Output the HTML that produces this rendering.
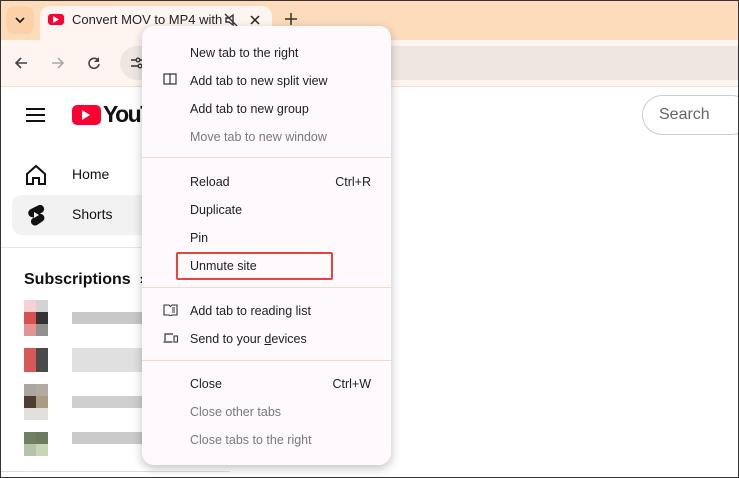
<!DOCTYPE html><html><head><style>
*{margin:0;padding:0;box-sizing:border-box}
body{width:739px;height:478px;overflow:hidden;font-family:"Liberation Sans",sans-serif;background:#fff;position:relative}
.a{position:absolute}
.tabs{left:0;top:0;width:739px;height:40px;background:#fddcbc}
.tb{left:0;top:40px;width:739px;height:47px;background:#fff5f0;border-bottom:1px solid #f6dcc6}
.menu{left:142px;top:26px;width:249px;height:439px;background:#fdf9fc;border-radius:12px;box-shadow:0 3px 10px rgba(0,0,0,.25)}
.mi{position:absolute;left:48px;font-size:12.5px;color:#1f1f1f}
.g{color:#7a7a7a}
.sc{position:absolute;right:20px;font-size:12.5px;color:#1f1f1f}
.sep{position:absolute;left:0;width:249px;height:1px;background:#f6d9bf}
.blk{position:absolute;width:12px;height:12px}
</style></head><body>
<div class="a tabs"></div>
<div class="a" style="left:6px;top:6px;width:28px;height:28px;background:#fbd1aa;border-radius:8px"></div>
<svg class="a" style="left:14px;top:15px" width="12" height="10"><path d="M2 3l4 4 4-4" stroke="#222" stroke-width="1.8" fill="none"/></svg>
<div class="a" style="left:40px;top:6px;width:232px;height:34px;background:#fff5f0;border-radius:10px 10px 0 0"></div>
<div class="a" style="left:48px;top:14px;width:16px;height:11px;background:#f03;border-radius:3px"></div>
<svg class="a" style="left:53px;top:16px" width="7" height="8"><path d="M0 0L6 3.5 0 7z" fill="#fff"/></svg>
<div class="a" style="left:72px;top:12px;font-size:13px;color:#222;width:150px;overflow:hidden;white-space:nowrap">Convert MOV to MP4 with a</div>
<svg class="a" style="left:224px;top:13px" width="14" height="14"><path d="M2 5h3l4-3v10l-4-3H2z" fill="none" stroke="#333" stroke-width="1.4"/><path d="M1 1l12 12" stroke="#333" stroke-width="1.4"/></svg>
<svg class="a" style="left:250px;top:15px" width="10" height="10"><path d="M1 1l8 8M9 1l-8 8" stroke="#222" stroke-width="1.5"/></svg>
<svg class="a" style="left:285px;top:13px" width="12" height="12"><path d="M6 0v12M0 6h12" stroke="#333" stroke-width="1.5"/></svg>
<div class="a tb"></div>
<div class="a" style="left:120px;top:46px;width:619px;height:34px;background:#efe6e1;border-radius:17px 0 0 17px"></div>
<svg class="a" style="left:14px;top:56px" width="14" height="14"><path d="M13 7H2M7 2L2 7l5 5" stroke="#444" stroke-width="1.6" fill="none"/></svg>
<svg class="a" style="left:51px;top:56px" width="14" height="14"><path d="M1 7h11M7 2l5 5-5 5" stroke="#aaa" stroke-width="1.6" fill="none"/></svg>
<svg class="a" style="left:87px;top:56px" width="14" height="14"><path d="M11.5 5A5 5 0 1 0 12 8" stroke="#444" stroke-width="1.6" fill="none"/><path d="M12 1v5H7" fill="#444"/></svg>
<svg class="a" style="left:130px;top:56px" width="14" height="14"><path d="M1 4h5M1 10h7M10 4h3M12 10h1" stroke="#333" stroke-width="1.4"/><circle cx="8" cy="4" r="1.8" fill="none" stroke="#333" stroke-width="1.3"/><circle cx="10" cy="10" r="1.8" fill="none" stroke="#333" stroke-width="1.3"/></svg>
<svg class="a" style="left:26px;top:107px" width="20" height="16"><path d="M0 2h19M0 8h19M0 14h19" stroke="#111" stroke-width="2"/></svg>
<div class="a" style="left:72px;top:105px;width:29px;height:20px;background:#f03;border-radius:5px"></div>
<svg class="a" style="left:82px;top:110px" width="9" height="10"><path d="M0 0L8 5 0 10z" fill="#fff"/></svg>
<div class="a" style="left:103px;top:101px;font-size:23px;font-weight:bold;letter-spacing:-1.5px;color:#111">YouTu</div>
<div class="a" style="left:642px;top:95px;width:110px;height:40px;border:1px solid #ccc;border-radius:20px"></div>
<div class="a" style="left:659px;top:106px;font-size:16px;color:#666">Search</div>
<svg class="a" style="left:25px;top:164px" width="22" height="22"><path d="M2 10L11 2l9 8v10h-6v-6h-6v6H2z" fill="none" stroke="#111" stroke-width="2"/></svg>
<div class="a" style="left:72px;top:166px;font-size:14px;color:#111">Home</div>
<div class="a" style="left:12px;top:195px;width:140px;height:40px;background:#f2f2f2;border-radius:10px"></div>
<svg class="a" style="left:27px;top:203px" width="18" height="24"><path d="M12 2L4 6a4 4 0 0 0 3 8l-1 1a4 4 0 0 0 4 7l6-4a4 4 0 0 0-3-7l1-1a4 4 0 0 0-2-8z" fill="#111"/><path d="M7 9v6l5-3z" fill="#f2f2f2"/></svg>
<div class="a" style="left:72px;top:206px;font-size:14px;color:#111">Shorts</div>
<div class="a" style="left:0;top:247px;width:142px;height:1px;background:#e5e5e5"></div>
<div class="a" style="left:24px;top:271px;font-size:16px;font-weight:bold;color:#111">Subscriptions&nbsp;&nbsp;›</div>
<div class="blk a" style="left:24px;top:300px;background:#f5d0d5"></div><div class="blk a" style="left:36px;top:300px;background:#d3d3d3"></div>
<div class="blk a" style="left:24px;top:312px;background:#d85052"></div><div class="blk a" style="left:36px;top:312px;background:#333"></div>
<div class="blk a" style="left:24px;top:324px;background:#e59293"></div><div class="blk a" style="left:36px;top:324px;background:#909090"></div>
<div class="a" style="left:72px;top:312px;width:70px;height:12px;background:#c8c8c8"></div>
<div class="a" style="left:24px;top:348px;width:12px;height:24px;background:#d85858"></div><div class="a" style="left:36px;top:348px;width:12px;height:24px;background:#4a4a4a"></div>
<div class="a" style="left:72px;top:348px;width:70px;height:24px;background:#e0e0e0"></div>
<div class="blk a" style="left:24px;top:384px;background:#aaa6a0"></div><div class="blk a" style="left:36px;top:384px;background:#b3aaa0"></div>
<div class="blk a" style="left:24px;top:396px;background:#4e3e30"></div><div class="blk a" style="left:36px;top:396px;background:#a99c80"></div>
<div class="a" style="left:24px;top:408px;width:24px;height:12px;background:#e2e0dc"></div>
<div class="a" style="left:72px;top:396px;width:70px;height:12px;background:#cfcfcf"></div>
<div class="blk a" style="left:24px;top:432px;background:#708060"></div><div class="blk a" style="left:36px;top:432px;background:#6c7a60"></div>
<div class="blk a" style="left:24px;top:444px;background:#b6c3ac"></div><div class="blk a" style="left:36px;top:444px;background:#c9d6b4"></div>
<div class="a" style="left:72px;top:432px;width:70px;height:12px;background:#cacaca"></div>
<div class="a" style="left:0;top:471px;width:230px;height:1px;background:#ddd"></div>

<div class="a menu">
<div class="mi" style="top:20px">New tab to the right</div>
<svg class="a" style="left:21px;top:47px" width="14" height="12"><rect x="1" y="1" width="12" height="10" fill="none" stroke="#333" stroke-width="1.2"/><path d="M7 1v10" stroke="#333" stroke-width="1.2"/></svg>
<div class="mi" style="top:48px">Add tab to new split view</div>
<div class="mi" style="top:76px">Add tab to new group</div>
<div class="mi g" style="top:104px">Move tab to new window</div>
<div class="sep" style="top:131px"></div>
<div class="mi" style="top:149px">Reload</div><div class="sc" style="top:149px">Ctrl+R</div>
<div class="mi" style="top:177px">Duplicate</div>
<div class="mi" style="top:205px">Pin</div>
<div class="a" style="left:34px;top:226px;width:157px;height:28px;border:2px solid #e5453f;border-radius:2px"></div>
<div class="mi" style="top:233px">Unmute site</div>
<div class="sep" style="top:261px"></div>
<svg class="a" style="left:21px;top:278px" width="15" height="12"><path d="M1 1h5l1.5 1.5L9 1h5v10H9l-1.5 1L6 11H1z" fill="none" stroke="#333" stroke-width="1.1"/><path d="M9 4h3M9 6h3M9 8h3" stroke="#333"/></svg>
<div class="mi" style="top:278px">Add tab to reading list</div>
<svg class="a" style="left:21px;top:306px" width="15" height="12"><path d="M2 9V2h8M0.5 10h9" stroke="#333" stroke-width="1.2" fill="none"/><rect x="11" y="4" width="3.5" height="6" fill="none" stroke="#333" stroke-width="1.1"/></svg>
<div class="mi" style="top:306px">Send to your <u>d</u>evices</div>
<div class="sep" style="top:334px"></div>
<div class="mi" style="top:351px">Close</div><div class="sc" style="top:351px">Ctrl+W</div>
<div class="mi g" style="top:379px">Close other tabs</div>
<div class="mi g" style="top:407px">Close tabs to the right</div>
</div>
<div class="a" style="left:0;top:0;width:739px;height:478px;border:1px solid #333;pointer-events:none"></div>
</body></html>
